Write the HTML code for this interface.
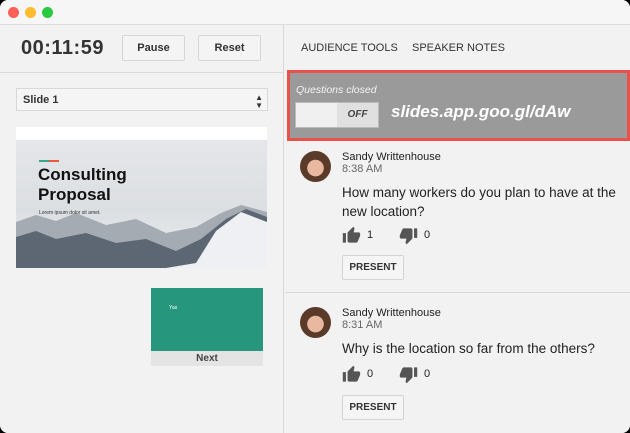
<html><head><style>
body{margin:0;width:630px;height:433px;background:#000;font-family:"Liberation Sans",sans-serif;overflow:hidden}
.win{position:absolute;left:0;top:0;width:630px;height:433px;background:#f2f2f2;border-radius:8px;overflow:hidden}
.tb{position:absolute;left:0;top:0;width:630px;height:24px;background:#f6f6f6;border-bottom:1px solid #ddd}
.dot{position:absolute;top:7px;width:11px;height:11px;border-radius:50%}
.left{position:absolute;left:0;top:25px;width:283px;height:408px;background:#f2f2f2;border-right:1px solid #d8d8d8}
.btn{position:absolute;background:#f4f4f4;border:1px solid #d6d6d6;border-radius:2px;font-size:11px;font-weight:bold;color:#333;text-align:center}
.right{position:absolute;left:285px;top:25px;width:345px;height:408px;background:#f2f2f2}
.q{position:absolute;left:0;width:345px}
.av{position:absolute;left:15px;width:31px;height:31px;border-radius:50%;background:radial-gradient(circle at 50% 55%,#e8b9a0 0 35%,#5a3a28 37%)}
.nm{position:absolute;left:57px;font-size:11px;color:#222}
.tm{position:absolute;left:57px;font-size:11px;color:#666}
.tx{position:absolute;left:57px;font-size:13.5px;color:#222;line-height:19px;width:280px}
.cnt{position:absolute;font-size:11px;color:#222}
.pb{position:absolute;left:57px;width:60px;height:23px;border:1px solid #d4d4d4;background:#f5f5f5;font-size:10px;font-weight:bold;color:#333;text-align:center;line-height:23px;border-radius:2px}
.ic{position:absolute;width:19px;height:19px}
</style></head><body><div class="win">
<div class="tb"><div class="dot" style="left:8px;background:#fc5f57"></div><div class="dot" style="left:25px;background:#fdbc2e"></div><div class="dot" style="left:42px;background:#29c940"></div></div>
<div class="left">
<div style="position:absolute;left:21px;top:12px;font-size:20px;font-weight:bold;color:#333;letter-spacing:0.5px">00:11:59</div>
<div class="btn" style="left:122px;top:10px;width:61px;height:24px;line-height:24px">Pause</div>
<div class="btn" style="left:198px;top:10px;width:61px;height:24px;line-height:24px">Reset</div>
<div style="position:absolute;left:0;top:47px;width:283px;border-top:1px solid #dadada"></div>
<div style="position:absolute;left:16px;top:63px;width:252px;height:23px;border:1px solid #d8d8d8;background:#f5f5f5;font-size:11px;font-weight:bold;color:#333;line-height:23px;padding-left:6px;box-sizing:border-box">Slide 1<span style="position:absolute;right:4px;font-size:8px;line-height:8px;top:5px">▲<br>▼</span></div>
<div style="position:absolute;left:16px;top:102px;width:251px;height:141px;background:linear-gradient(#fff 0 13px,#e4e6e9 13px,#dcdfe2 60%,#eef0f2);overflow:hidden">
<svg width="251" height="141" style="position:absolute;left:0;top:0"><polygon points="0,95 20,88 40,94 60,86 90,98 120,92 150,106 180,100 205,86 225,78 240,82 251,85 251,141 0,141" fill="#a5abb3"/><polygon points="0,110 20,104 40,112 70,106 100,116 130,112 160,124 185,112 210,92 230,82 251,90 251,141 0,141" fill="#5d6673"/><polygon points="180,136 200,104 225,85 251,95 251,141 150,141" fill="#eef0f3"/></svg>
<div style="position:absolute;left:23px;top:33px;width:20px;height:2px;background:linear-gradient(90deg,#3aa58a 50%,#e95b3c 50%)"></div>
<div style="position:absolute;left:22px;top:38px;font-size:17px;font-weight:bold;color:#111;line-height:20px">Consulting<br>Proposal</div>
<div style="position:absolute;left:23px;top:83px;font-size:5px;color:#333">Lorem ipsum dolor sit amet.</div>
</div>
<div style="position:absolute;left:151px;top:263px;width:112px;height:63px;background:#26967c"><div style="position:absolute;left:18px;top:17px;font-size:5px;color:#fff">Yas</div></div>
<div style="position:absolute;left:151px;top:326px;width:112px;height:15px;background:#e4e4e4;font-size:10px;font-weight:bold;color:#444;text-align:center;line-height:15px">Next</div>
</div>
<div class="right">
<div style="position:absolute;left:16px;top:17px;font-size:11px;color:#333">AUDIENCE TOOLS</div>
<div style="position:absolute;left:127px;top:17px;font-size:11px;color:#333">SPEAKER NOTES</div>
<div style="position:absolute;left:2px;top:45px;border:3px solid #e8524a;background:#9a9a9a;width:337px;height:65px">
<div style="position:absolute;left:6px;top:11px;font-size:10.5px;font-style:italic;color:#f4f4f4">Questions closed</div>
<div style="position:absolute;left:5px;top:29px;width:82px;height:24px;background:#f0f0f0;border:1px solid #bbb"><div style="position:absolute;left:41px;top:0;width:41px;height:24px;background:#e0e0e0;font-size:10px;font-weight:bold;font-style:italic;color:#444;text-align:center;line-height:24px">OFF</div></div>
<div style="position:absolute;left:101px;top:29px;font-size:17px;font-weight:bold;font-style:italic;color:#fff">slides.app.goo.gl/dAw</div>
</div>
<div class="q" style="top:120px">
<div class="av" style="top:6px"></div>
<div class="nm" style="top:6px">Sandy Writtenhouse</div>
<div class="tm" style="top:18px">8:38 AM</div>
<div class="tx" style="top:38px">How many workers do you plan to have at the new location?</div>
<svg class="ic" style="left:57px;top:81px" viewBox="0 0 24 24"><path fill="#555" d="M1 21h4V9H1v12zm22-11c0-1.1-.9-2-2-2h-6.3l1-4.6v-.3c0-.4-.2-.8-.4-1.1L14.2 1 7.6 7.6C7.2 7.9 7 8.4 7 9v10c0 1.1.9 2 2 2h9c.8 0 1.5-.5 1.8-1.2l3-7.1c.1-.2.1-.5.1-.7v-2z"/></svg>
<div class="cnt" style="left:82px;top:84px">1</div>
<svg class="ic" style="left:114px;top:81px" viewBox="0 0 24 24"><path fill="#555" d="M15 3H6c-.8 0-1.5.5-1.8 1.2l-3 7.1c-.1.2-.2.5-.2.7v2c0 1.1.9 2 2 2h6.3l-1 4.6v.3c0 .4.2.8.4 1.1L9.8 23l6.6-6.6c.4-.4.6-.9.6-1.4V5c0-1.1-.9-2-2-2zm4 0v12h4V3h-4z"/></svg>
<div class="cnt" style="left:139px;top:84px">0</div>
<div class="pb" style="top:110px">PRESENT</div>
</div>
<div style="position:absolute;left:0;top:267px;width:345px;border-top:1px solid #d8d8d8"></div>
<div class="q" style="top:276px">
<div class="av" style="top:6px"></div>
<div class="nm" style="top:6px">Sandy Writtenhouse</div>
<div class="tm" style="top:18px">8:31 AM</div>
<div class="tx" style="top:38px">Why is the location so far from the others?</div>
<svg class="ic" style="left:57px;top:64px" viewBox="0 0 24 24"><path fill="#555" d="M1 21h4V9H1v12zm22-11c0-1.1-.9-2-2-2h-6.3l1-4.6v-.3c0-.4-.2-.8-.4-1.1L14.2 1 7.6 7.6C7.2 7.9 7 8.4 7 9v10c0 1.1.9 2 2 2h9c.8 0 1.5-.5 1.8-1.2l3-7.1c.1-.2.1-.5.1-.7v-2z"/></svg>
<div class="cnt" style="left:82px;top:67px">0</div>
<svg class="ic" style="left:114px;top:64px" viewBox="0 0 24 24"><path fill="#555" d="M15 3H6c-.8 0-1.5.5-1.8 1.2l-3 7.1c-.1.2-.2.5-.2.7v2c0 1.1.9 2 2 2h6.3l-1 4.6v.3c0 .4.2.8.4 1.1L9.8 23l6.6-6.6c.4-.4.6-.9.6-1.4V5c0-1.1-.9-2-2-2zm4 0v12h4V3h-4z"/></svg>
<div class="cnt" style="left:139px;top:67px">0</div>
<div class="pb" style="top:94px">PRESENT</div>
</div>
</div>
</div></body></html>
